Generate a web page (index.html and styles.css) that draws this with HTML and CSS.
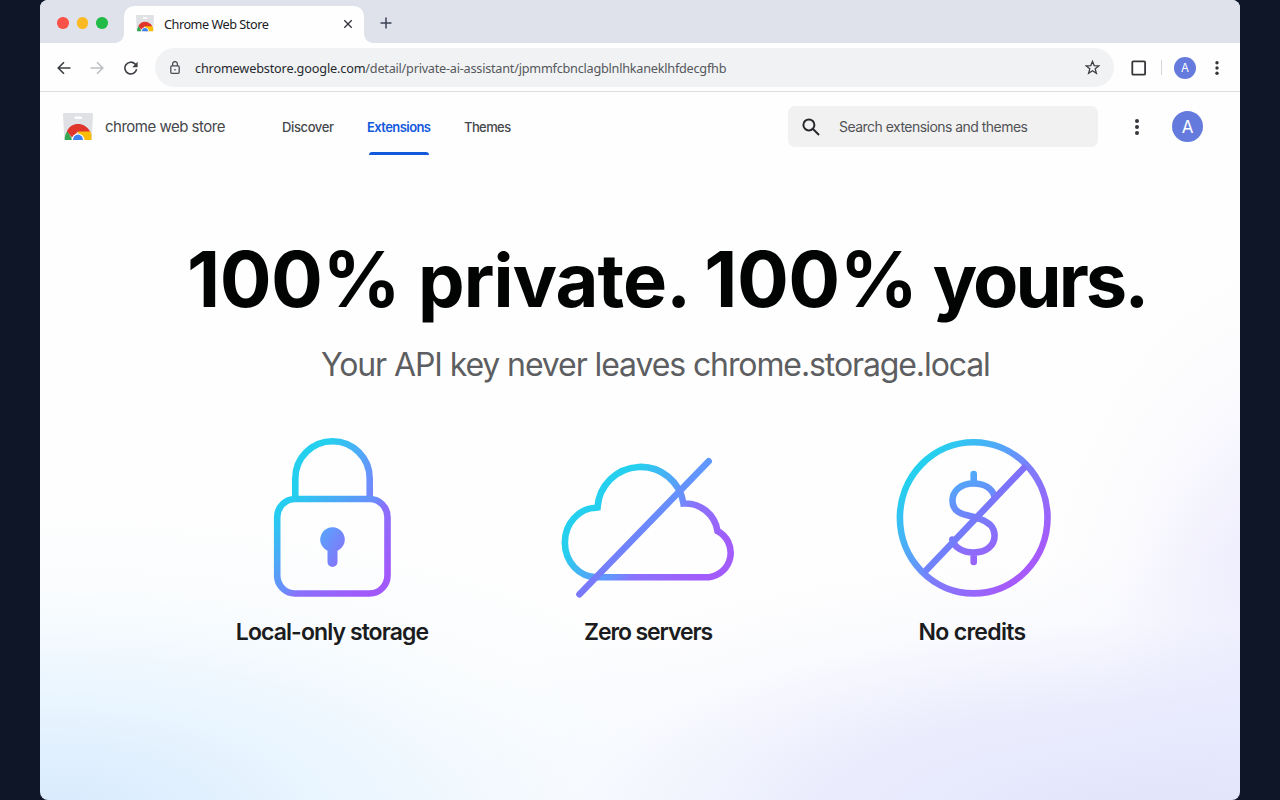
FILE: index.html
```html
<!DOCTYPE html>
<html lang="en">
<head>
<meta charset="utf-8">
<title>Chrome Web Store</title>
<link rel="stylesheet" href="styles.css">
</head>
<body>
<svg class="defs" width="0" height="0">
  <defs>
    <symbol id="store-logo" viewBox="0 0 30 28">
      <path fill="#dfe1e5" d="M0 1a1 1 0 0 1 1-1h28a1 1 0 0 1 1 1l-1.300 26H1.300z"/>
      <rect x="11.500" y="3.500" width="7.500" height="2.600" rx="1" fill="#fff"/>
      <path fill="#34a853" d="M1.800 27a13.200 13.200 0 0 1 2.600-9L9.600 27z"/>
      <path fill="#fbbc04" d="M15 18h12.200a13.200 13.200 0 0 1 1.200 9H15z"/>
      <path fill="#e0352b" d="M3.900 18.200C6.200 13.500 10.300 11 15 11s9.600 2.600 12 7.500H15L9 24.500z"/>
      <path fill="#fff" d="M8.600 27a6.400 6.400 0 1 1 12.800 0z"/>
      <path fill="#3f83ee" d="M10 27a5 5.400 0 1 1 10 0z"/>
    </symbol>
  </defs>
</svg>
<div class="window">
  <div class="tabstrip">
    <div class="lights"><i class="light red"></i><i class="light yellow"></i><i class="light green"></i></div>
    <div class="tab">
      <svg class="favicon" width="18" height="17"><use href="#store-logo"/></svg>
      <span class="tab-title">Chrome Web Store</span>
      <svg class="close" width="10" height="10" viewBox="0 0 10 10"><path d="M1.300 1.300l7.400 7.400M8.700 1.300l-7.400 7.400"/></svg>
    </div>
    <svg class="plus" width="12" height="12" viewBox="0 0 12 12"><path d="M6 .5v11M.5 6h11"/></svg>
  </div>
  <div class="toolbar">
    <svg class="nav-icon back" width="14" height="14" viewBox="0 0 14 14"><path d="M13.500 7H1.200M7 1.200L1.200 7 7 12.800"/></svg>
    <svg class="nav-icon forward" width="14" height="14" viewBox="0 0 14 14"><path d="M.5 7h12.300M7 1.200L12.800 7 7 12.800"/></svg>
    <svg class="nav-icon reload" width="14" height="14" viewBox="0 0 14 14"><path d="M12.600 8.200A5.900 5.900 0 1 1 11 2.900l1.200 1.200"/><path class="solid" d="M13.600.8v5.400H8.300z"/></svg>
    <div class="address">
      <svg class="padlock" width="10" height="13" viewBox="0 0 10 13"><rect x=".8" y="4.900" width="8.400" height="7.400" rx="1"/><path d="M2.600 4.900V3a2.400 2.400 0 0 1 4.800 0v1.900"/><path d="M5 8v1.400"/></svg>
      <span class="url"><b>chromewebstore.google.com</b>/detail/private-ai-assistant/jpmmfcbnclagblnlhkaneklhfdecgfhb</span>
      <svg class="star" width="15" height="15" viewBox="0 0 15 15"><path d="M7.500 1.400l1.700 4.200 4.500.3-3.500 2.900 1.200 4.500-3.900-2.500-3.900 2.500 1.200-4.500L1.300 5.900l4.500-.3z"/></svg>
    </div>
    <svg class="square" width="16" height="16" viewBox="0 0 16 16"><rect x="1.300" y="1.300" width="12.800" height="13.400" rx="1"/></svg>
    <span class="divider"></span>
    <span class="avatar small">A</span>
    <svg class="dots" width="4" height="16" viewBox="0 0 4 16"><circle cx="2" cy="2.700" r="1.700"/><circle cx="2" cy="8" r="1.700"/><circle cx="2" cy="13.300" r="1.700"/></svg>
  </div>
  <header class="store-header">
    <svg class="logo" width="30" height="28"><use href="#store-logo"/></svg>
    <span class="brand">chrome web store</span>
    <nav class="nav">
      <a class="discover">Discover</a>
      <a class="extensions">Extensions</a>
      <a class="themes">Themes</a>
    </nav>
    <div class="search">
      <svg width="18" height="18" viewBox="0 0 18 18"><circle cx="6.900" cy="6.900" r="5.500"/><path d="M11 11l6 6"/></svg>
      <span>Search extensions and themes</span>
    </div>
    <svg class="dots header-dots" width="4" height="16" viewBox="0 0 4 16"><circle cx="2" cy="2" r="2"/><circle cx="2" cy="8" r="2"/><circle cx="2" cy="14" r="2"/></svg>
    <span class="avatar">A</span>
  </header>
  <main class="hero">
    <h1>100% <span class="word-private">private.</span> 100% <span class="word-yours">yours.</span></h1>
    <p class="subtitle">Your API key never leaves chrome.storage.local</p>
    <div class="features">
      <section class="feature">
        <svg width="120" height="164" viewBox="272 436 120 164">
          <defs>
            <linearGradient id="shackle" gradientUnits="userSpaceOnUse" x1="300" y1="450" x2="390" y2="500"><stop offset=".2" stop-color="#25d0ee"/><stop offset=".75" stop-color="#6e8eff"/><stop offset="1" stop-color="#8c72fb"/></linearGradient>
            <linearGradient id="body" gradientUnits="userSpaceOnUse" x1="290" y1="500" x2="375" y2="585"><stop offset="0" stop-color="#25cdf0"/><stop offset=".5" stop-color="#6b8cfb"/><stop offset=".6" stop-color="#8a70fb"/><stop offset="1" stop-color="#a259fb"/></linearGradient>
            <linearGradient id="keyhole" x1="0" y1="0" x2="1" y2="1"><stop offset="0" stop-color="#54a8fb"/><stop offset="1" stop-color="#8f6bfa"/></linearGradient>
          </defs>
          <path class="line" stroke="url(#shackle)" d="M295.300 499v-20.500a37.200 37.200 0 0 1 74.400 0V499"/>
          <rect class="line" stroke="url(#body)" x="277.200" y="499" width="110.300" height="94.500" rx="18"/>
          <path fill="url(#keyhole)" d="M327.500 550.700a12.300 12.300 0 1 1 10 0V562a5 5 0 0 1-10 0z"/>
        </svg>
        <h2 class="label-storage">Local-only storage</h2>
      </section>
      <section class="feature">
        <svg width="176" height="164" viewBox="560 436 176 164">
          <defs>
            <linearGradient id="cloud" gradientUnits="userSpaceOnUse" x1="600" y1="490" x2="700" y2="575"><stop offset=".1" stop-color="#25d0ee"/><stop offset=".5" stop-color="#6692fb"/><stop offset=".63" stop-color="#8a72fb"/><stop offset="1" stop-color="#a25cfb"/></linearGradient>
            <linearGradient id="slash" gradientUnits="userSpaceOnUse" x1="708" y1="461" x2="580" y2="594"><stop offset="0" stop-color="#5f98fd"/><stop offset="1" stop-color="#7a78fb"/></linearGradient>
          </defs>
          <path class="line" stroke="url(#cloud)" d="M597 577.200a31.900 34.700 0 0 1-.5-69.400l1-.2A43.300 43.300 0 0 1 683.500 503.500A32.500 32.500 0 0 1 717.500 531A24.600 24.600 0 0 1 709 577.200Z"/>
          <path class="line round" stroke="url(#slash)" d="M579.500 594.300L708.700 461.300"/>
        </svg>
        <h2 class="label-servers">Zero servers</h2>
      </section>
      <section class="feature">
        <svg width="162" height="164" viewBox="891 436 162 164">
          <defs>
            <linearGradient id="coin" gradientUnits="userSpaceOnUse" x1="915" y1="475" x2="1025" y2="570"><stop offset="0" stop-color="#25d0ee"/><stop offset=".38" stop-color="#5c9efb"/><stop offset=".56" stop-color="#7c7dfb"/><stop offset="1" stop-color="#a65afb"/></linearGradient>
            <linearGradient id="dollar" gradientUnits="userSpaceOnUse" x1="955" y1="478" x2="993" y2="555"><stop offset="0" stop-color="#4facfa"/><stop offset=".5" stop-color="#747ffb"/><stop offset="1" stop-color="#9963fb"/></linearGradient>
            <linearGradient id="bar" gradientUnits="userSpaceOnUse" x1="924" y1="572" x2="1026" y2="466"><stop offset="0" stop-color="#6e83fc"/><stop offset="1" stop-color="#806ffa"/></linearGradient>
          </defs>
          <ellipse class="line" stroke="url(#coin)" cx="973.700" cy="517.800" rx="73.800" ry="75.600"/>
          <path class="line round" stroke="url(#dollar)" d="M973.700 474v9.500M973.700 552.500v9.500M994.500 496.500C992 488 984 483.500 973.700 483.500C960 483.500 952.500 491.500 952.500 500.500C952.500 517 972 514.500 980 519C990 522.500 994.600 528 994.600 535.500C994.600 546 986 552.500 973.700 552.500C962 552.500 954 547 952.300 539.500"/>
          <path class="line" stroke="url(#bar)" d="M924.300 572.300L1025.700 466"/>
        </svg>
        <h2 class="label-credits">No credits</h2>
      </section>
    </div>
  </main>
</div>
</body>
</html>
```

FILE: styles.css
```css
* { box-sizing: border-box; }
body { margin: 0; height: 800px; padding: 0 40px; background: #0e1628; overflow: hidden; font-family: Inter, "Liberation Sans", sans-serif; color: #202124; }
svg { display: block; flex: none; }
.defs { position: absolute; }
.window {
  height: 800px; overflow: hidden; border-radius: 8px;
  background:
    radial-gradient(ellipse 760px 310px at 0 102%, #d6e9fd 0%, rgba(228,243,255,.75) 40%, rgba(240,248,255,.3) 72%, rgba(255,255,255,0) 100%),
    radial-gradient(ellipse 780px 270px at 92% 103%, #e1e3fb 0%, rgba(232,234,253,.85) 45%, rgba(244,246,255,.4) 75%, rgba(255,255,255,0) 100%),
    radial-gradient(ellipse 280px 440px at 106% 86%, #e6e4fb 0%, rgba(236,235,253,.75) 45%, rgba(248,248,255,.4) 75%, rgba(255,255,255,0) 100%),
    #fefefe;
}
.tabstrip { height: 43px; background: #dfe2ea; display: flex; align-items: center; }
.lights { display: flex; gap: 8px; width: 84px; padding: 3px 0 0 17px; }
.light { width: 11.5px; height: 11.5px; border-radius: 50%; }
.red { background: #fa5149; }
.yellow { background: #fbb924; }
.green { background: #22bb47; }
.tab { position: relative; align-self: flex-end; width: 240px; height: 37px; padding: 0 11px 2px 12px; display: flex; align-items: center; background: #fefefe; border-radius: 10px 10px 0 0; }
.tab::before, .tab::after { content: ""; position: absolute; bottom: 0; width: 9px; height: 9px; }
.tab::before { left: -9px; background: radial-gradient(circle at 0 0, transparent 8.500px, #fefefe 9px); }
.tab::after { right: -9px; background: radial-gradient(circle at 100% 0, transparent 8.500px, #fefefe 9px); }
.tab-title { margin-left: 10px; font: 12.7px/18px "Noto Sans", sans-serif; letter-spacing: -.48px; white-space: nowrap; }
.close { margin-left: auto; }
.close path { stroke: #303338; stroke-width: 1.3; }
.plus { margin: 3px 0 0 16px; }
.plus path { stroke: #3c4257; stroke-width: 1.5; }
.toolbar { height: 49px; background: #fefefe; border-bottom: 1px solid #dcdee2; display: flex; align-items: center; padding: 1px 21px 0 17px; }
.nav-icon { fill: none; stroke: #3c3f43; stroke-width: 1.6; }
.nav-icon .solid { fill: #3c3f43; stroke: none; }
.forward { margin-left: 19px; stroke: #bcbec2; }
.reload { margin-left: 20px; }
.address { margin-left: 17px; width: 959px; height: 39px; border-radius: 20px; background: #f1f2f4; display: flex; align-items: center; padding: 0 14px 0 15px; }
.padlock { fill: none; stroke: #4b4e52; stroke-width: 1.3; }
.url { margin-left: 15px; font: 12.7px/18px "Noto Sans", sans-serif; color: #55585c; letter-spacing: -.24px; white-space: nowrap; }
.url b { font-weight: 400; color: #27292d; letter-spacing: -.17px; }
.star { margin-left: auto; fill: none; stroke: #3c3f43; stroke-width: 1.3; }
.square { margin-left: 17px; fill: none; stroke: #34363a; stroke-width: 1.8; }
.divider { width: 1px; height: 15px; margin: 0 12px 0 14px; background: #d4d6da; }
.avatar { display: flex; align-items: center; justify-content: center; flex: none; width: 31px; height: 31px; border-radius: 50%; background: #647bdd; color: #fff; font-size: 17px; }
.avatar.small { width: 22px; height: 22px; font-size: 11.5px; }
.dots { margin-left: 19px; fill: #34363a; }
.store-header { height: 69px; display: flex; align-items: center; padding-left: 23px; }
.brand { width: 120px; margin-left: 12px; font-size: 15px; color: #45484c; white-space: nowrap; letter-spacing: -.5px; }
.nav { align-self: stretch; display: flex; margin-left: 57px; font-size: 13px; font-weight: 500; line-height: 71px; color: #45484c; }
.discover { width: 85px; letter-spacing: -.38px; }
.extensions { position: relative; width: 97px; color: #1259dc; font-weight: 600; letter-spacing: -.57px; }
.extensions::after { content: ""; position: absolute; left: 2px; top: 59.5px; width: 60px; height: 3px; border-radius: 3px 3px 0 0; background: #1259dc; }
.themes { width: 324px; letter-spacing: -.6px; }
.search { width: 310px; height: 41px; border-radius: 7px; background: #f1f1f1; display: flex; align-items: center; padding-left: 14px; gap: 19px; font-size: 14px; letter-spacing: -.53px; color: #515357; white-space: nowrap; }
.search svg { fill: none; stroke: #27292d; stroke-width: 2; }
.header-dots { margin: 0 33px 0 37px; }
.hero h1 { margin: 69.500px 0 0 147px; font-size: 77px; font-weight: 700; line-height: 96px; letter-spacing: -.5px; color: #020303; white-space: nowrap; }
.word-private, .word-yours { font-size: 74px; }
.word-private { margin-right: -3.500px; letter-spacing: -.9px; }
.word-yours { margin-left: -2.500px; letter-spacing: -2.9px; }
.subtitle { margin: 15px 0 0 281px; font-size: 32px; line-height: 44px; letter-spacing: -1.1px; color: #5d5e61; white-space: nowrap; }
.features { display: grid; grid-template-columns: 316px 316px 332px; margin: 49.500px 0 0 134px; }
.feature { display: flex; flex-direction: column; align-items: center; }
.feature h2 { margin: 17px 0 0; font-size: 23px; line-height: 30px; font-weight: 600; color: #1b1c20; white-space: nowrap; }
.label-storage { letter-spacing: -.92px; }
.label-servers { letter-spacing: -1.1px; }
.label-credits { letter-spacing: -.7px; }
.line { fill: none; stroke-width: 6.6; }
.round { stroke-linecap: round; }
```
